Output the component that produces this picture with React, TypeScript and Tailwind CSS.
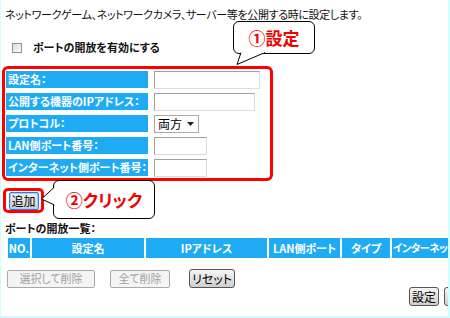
import React from 'react';

const font = "font-['Noto_Sans_CJK_JP','Noto_Sans_CJK_SC',sans-serif] [font-feature-settings:'palt']";

type Row = { label: string; field: React.ReactNode };

function TextBox({ width }: { width: string }) {
  return <div className={`h-[18px] ${width} border border-[#a0a0a0] border-r-[#dcdcdc] border-b-[#dcdcdc] bg-white`} />;
}

function Select() {
  return (
    <div className="flex h-[18px] w-[45px] items-center justify-between border border-[#a8a8a8] bg-white pl-[3px] pr-[4px] text-[12px] text-black">
      <span>両方</span>
      <svg width="7" height="4" viewBox="0 0 7 4">
        <path d="M0 0h7L3.5 4z" fill="#222" />
      </svg>
    </div>
  );
}

function Callout({ className, tail, children }: { className: string; tail: React.ReactNode; children: React.ReactNode }) {
  return (
    <div className={`absolute ${className}`}>
      <div className="relative flex h-full w-full items-center justify-center rounded-[6px] border border-black bg-white text-[17px] font-bold text-[#f00000]">
        {children}
      </div>
      {tail}
    </div>
  );
}

function GrayButton({ label, width, disabled }: { label: string; width: string; disabled?: boolean }) {
  if (disabled) {
    return (
      <div className={`flex h-[18px] ${width} items-center justify-center rounded-[2px] border border-[#a9a9a9] bg-[#f4f4f4] text-[11px] text-[#a0a0a0]`}>
        {label}
      </div>
    );
  }
  return (
    <div className={`flex h-[19px] ${width} items-center justify-center rounded-[3px] border border-[#555] bg-gradient-to-b from-[#f6f6f6] to-[#cfcfcf] text-[12px] text-black`}>
      {label}
    </div>
  );
}

export default function App() {
  const rows: Row[] = [
    { label: '設定名：', field: <TextBox width="w-[106px]" /> },
    { label: '公開する機器のIPアドレス：', field: <TextBox width="w-[101px]" /> },
    { label: 'プロトコル：', field: <Select /> },
    { label: 'LAN側ポート番号：', field: <TextBox width="w-[53px]" /> },
    { label: 'インターネット側ポート番号：', field: <TextBox width="w-[53px]" /> },
  ];

  const cols = [
    { label: 'NO.', w: 'w-[22px] justify-center text-[11px]' },
    { label: '設定名', w: 'w-[112px] justify-center text-[11px]' },
    { label: 'IPアドレス', w: 'w-[121px] justify-center text-[11px]' },
    { label: 'LAN側ポート', w: 'w-[71px] justify-center text-[11px]' },
    { label: 'タイプ', w: 'w-[48px] justify-center text-[11px]' },
    { label: 'インターネッ', w: 'w-[56px] justify-start pl-[1px] text-[10.5px] tracking-[-0.6px]' },
  ];

  return (
    <div className={`relative h-[318px] w-[450px] overflow-hidden border-x-2 border-b-2 border-l-[1px] border-[#ccffff] bg-white text-[11px] leading-none text-[#111] ${font}`}>
      <p className="ml-[4px] mt-[9px] whitespace-nowrap text-[11px] tracking-[-0.35px]">
        ネットワークゲーム、ネットワークカメラ、サーバー等を公開する時に設定します。
      </p>

      <div className="ml-[11px] mt-[22px] flex items-center gap-[11px]">
        <div className="h-[10px] w-[10px] border border-[#8f8f8f] bg-gradient-to-br from-[#dcdcdc] to-[#fafafa]" />
        <span className="text-[11px] font-bold">ポートの開放を有効にする</span>
      </div>

      <div className="ml-[1px] mt-[13px] w-[271px] rounded-[6px] border-[3px] border-[#ff0000] pb-[1px] pl-[1px] pt-[2px]">
        <div className="flex flex-col gap-[4px]">
          {rows.map((r) => (
            <div key={r.label} className="flex h-[18px] items-start gap-[6px]">
              <div className="flex h-[17px] w-[142px] items-center bg-[#1fabf4] pl-[2px] text-[11px] font-bold text-white">
                {r.label}
              </div>
              {r.field}
            </div>
          ))}
        </div>
      </div>

      <div className="ml-[2px] mt-[7px] flex h-[25px] w-[41px] items-center justify-center rounded-[5px] border-[3px] border-[#ff0000]">
        <div className="flex h-[18px] w-[30px] items-center justify-center rounded-[2px] border border-[#3a7bd5] bg-gradient-to-b from-[#f2f2f2] to-[#cfcfcf] text-[12px] text-black shadow-[inset_0_0_0_1px_#9fd0ff]">
          追加
        </div>
      </div>

      <p className="ml-[4px] mt-[10px] text-[11px] font-bold">ポートの開放一覧：</p>

      <div className="ml-[7px] mt-[4px] flex h-[20px] gap-[2px]">
        {cols.map((c) => (
          <div key={c.label} className={`flex h-full shrink-0 ${c.w} items-center overflow-hidden whitespace-nowrap bg-[#1fabf4] font-bold text-white`}>
            {c.label}
          </div>
        ))}
      </div>

      <div className="ml-[6px] mt-[11px] flex items-center">
        <GrayButton label="選択して削除" width="w-[88px]" disabled />
        <div className="ml-[15px]">
          <GrayButton label="全て削除" width="w-[60px]" disabled />
        </div>
        <div className="ml-[19px]">
          <GrayButton label="リセット" width="w-[46px]" />
        </div>
      </div>

      <div className="mt-[-1px] flex justify-end gap-[5px]">
        <GrayButton label="設定" width="w-[30px]" />
        <div className="-mr-[30px] w-[34px] overflow-hidden">
          <div className="h-[19px] w-[34px] rounded-[3px] border border-[#555] bg-gradient-to-b from-[#f6f6f6] to-[#cfcfcf]" />
        </div>
      </div>

      <Callout
        className="left-[232px] top-[21px] h-[33px] w-[82px]"
        tail={
          <svg className="absolute left-[2px] top-[31px]" width="32" height="14" viewBox="0 0 32 14">
            <path d="M6 0.5 L2 12.5 L30 0.5" fill="white" stroke="black" strokeWidth="1" />
            <path d="M6.5 0 L29 0" stroke="white" strokeWidth="2" />
          </svg>
        }
      >
        ①設定
      </Callout>

      <Callout
        className="left-[52px] top-[180px] h-[39px] w-[102px]"
        tail={
          <svg className="absolute left-[-12px] top-[6px]" width="14" height="22" viewBox="0 0 14 22">
            <path d="M13.5 1 L0.5 13 L13.5 19" fill="white" stroke="black" strokeWidth="1" />
            <path d="M14 1.5 L14 18.5" stroke="white" strokeWidth="2" />
          </svg>
        }
      >
        ②クリック
      </Callout>
    </div>
  );
}
